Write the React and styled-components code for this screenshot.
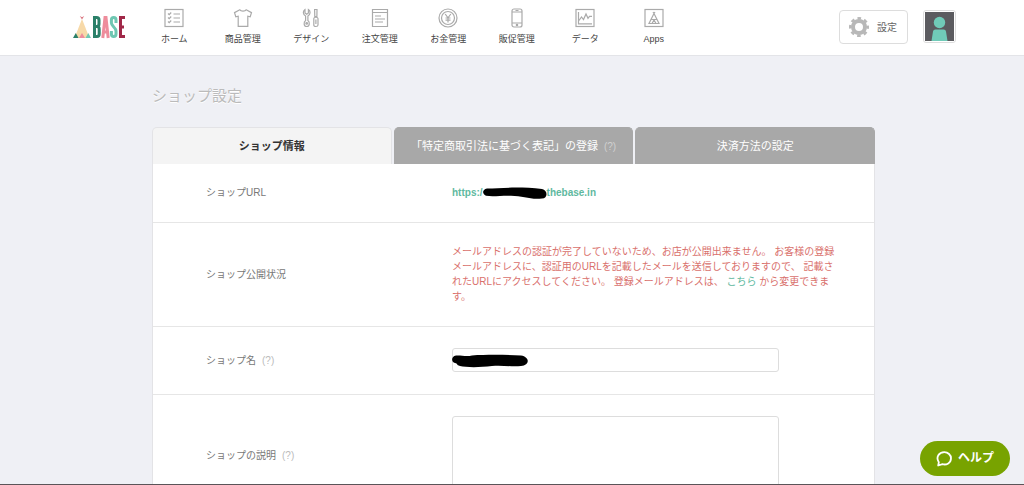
import React from 'react';
import styled, { createGlobalStyle } from 'styled-components';

const icons = {
  home: (
    <>
      <rect x="1" y="1.5" width="18" height="17" />
      <path d="M4 5.5l1.2 1.2 2-2.2M4 9.5l1.2 1.2 2-2.2M4 13.5l1.2 1.2 2-2.2M9.5 6h6.5M9.5 10h6.5M9.5 14h6.5" />
    </>
  ),
  item: (
    <path d="M6.8 1.7C7.8 3.6 12.2 3.6 13.2 1.7L18.5 4.6L17.2 8.8L14.8 8.2V18.3H5.2V8.2L2.8 8.8L1.5 4.6Z" />
  ),
  design: (
    <>
      <path d="M4 1.5C1.6 3 1.8 6.6 4.6 8V12.6C2.4 14 2.6 18.5 5.7 18.5S9 14 6.9 12.6V8C9.6 6.6 9.8 3 7.4 1.5V5L5.7 6.2L4 5Z" />
      <circle cx="5.7" cy="15.4" r="0.8" />
      <path d="M13.6 1.5H16L15.9 8.5H13.8ZM12.8 10.5C12.8 8.8 17 8.8 17 10.5V17C17 19 12.8 19 12.8 17ZM14.9 11.5V16" />
    </>
  ),
  order: (
    <>
      <path d="M2.5 1.5H17.5V18.5H2.5ZM2.5 4.5H17.5" />
      <path d="M5 8H11M5 11H15M5 14H13" />
    </>
  ),
  money: (
    <>
      <circle cx="10" cy="10" r="9" />
      <circle cx="10" cy="10" r="6.5" />
      <path d="M7.2 6L10 9.8L12.8 6M10 9.8V14.5M7.5 10H12.5M7.5 12.2H12.5" />
    </>
  ),
  phone: (
    <>
      <rect x="5" y="1" width="10" height="18" rx="2" />
      <path d="M5 4H15M5 15H15M8.5 2.5H11.5" />
      <circle cx="10" cy="17" r="0.7" />
    </>
  ),
  data: (
    <>
      <rect x="1" y="1.5" width="18" height="17" />
      <path d="M3.5 4V15.8H17M4 12.5L6.5 9L8.5 11.5L11 6L13 10.3L14.5 8.3H17" />
    </>
  ),
  apps: (
    <>
      <rect x="1" y="1.5" width="18" height="17" />
      <path d="M9 4L10 5.5L11 4M10 5.5L5 15.5H15ZM7 11.5H13M8 15.5L10 12L12 15.5" />
    </>
  ),
};

const menu = [
  { icon: 'home', text: 'ホーム' },
  { icon: 'item', text: '商品管理' },
  { icon: 'design', text: 'デザイン' },
  { icon: 'order', text: '注文管理' },
  { icon: 'money', text: 'お金管理' },
  { icon: 'phone', text: '販促管理' },
  { icon: 'data', text: 'データ' },
  { icon: 'apps', text: 'Apps' },
];

const Logo = () => (
  <LogoLink href="#" aria-label="BASE">
    <svg width="20" height="24" viewBox="0 0 20 24">
      <path d="M10 4L17.5 23H2.5Z" fill="#f7d9a8" />
      <path d="M7.8 1L10 4.6L12.2 1L10 2.2Z" fill="#d9747f" />
      <path d="M1 23L3.8 18L6.5 23Z" fill="#2b8069" />
      <path d="M7 23L10 18L13 23Z" fill="#ee8d9c" />
      <path d="M13.5 23L16.3 18L19 23Z" fill="#6fc7b2" />
    </svg>
    <svg width="34" height="24" viewBox="0 0 34 24" fill="none" strokeWidth="3">
      <path d="M2.5 2.5H4.5Q7 2.5 7 5V9Q7 11.5 4.5 11.5H2.5ZM2.5 11.5H5Q7.2 11.5 7.2 14V19Q7.2 21.5 5 21.5H2.5Z" stroke="#2b8069" />
      <path d="M10.8 23L13 2.5H14L16.2 23M12 17H15" stroke="#ee8d9c" />
      <path d="M24 8V5Q24 2.5 21.7 2.5T19.4 5V8C19.4 11 24 12.5 24 16V19Q24 21.5 21.7 21.5T19.4 19V16" stroke="#6fc7b2" />
      <path d="M33 2.5H28.5V21.5H33M28.5 12H32" stroke="#a02848" />
    </svg>
  </LogoLink>
);

const Header = () => (
  <HeaderBar>
    <Logo />
    <Nav>
      {menu.map((item) => (
        <NavItem href="#" key={item.icon}>
          <NavIcon viewBox="0 0 20 20">{icons[item.icon]}</NavIcon>
          {item.text}
        </NavItem>
      ))}
    </Nav>
    <HeaderRight>
      <SettingButton type="button">
        <svg width="20" height="20" viewBox="0 0 20 20" fill="none" stroke="#b8b8b8">
          <circle cx="10" cy="10" r="6" strokeWidth="4" />
          <circle cx="10" cy="10" r="8.7" strokeWidth="2.6" strokeDasharray="3.6 3.233" strokeDashoffset="1.8" />
        </svg>
        設定
      </SettingButton>
      <Avatar type="button" aria-label="アカウント">
        <svg width="29" height="29" viewBox="0 0 29 29">
          <rect width="29" height="29" fill="#5b5b5f" />
          <circle cx="14.5" cy="10.5" r="5.7" fill="#70cbb8" />
          <path d="M6.5 29L8 19.5Q8.3 17.5 10.3 17.5H18.7Q20.7 17.5 21 19.5L22.5 29Z" fill="#70cbb8" />
        </svg>
      </Avatar>
    </HeaderRight>
  </HeaderBar>
);

export default function App() {
  return (
    <Page>
      <GlobalStyle />
      <Header />
      <Main>
        <Title>ショップ設定</Title>
        <Tabs>
          <Tab type="button" $active>ショップ情報</Tab>
          <Tab type="button">「特定商取引法に基づく表記」の登録<Hint $light>(?)</Hint></Tab>
          <Tab type="button">決済方法の設定</Tab>
        </Tabs>
        <Panel>
          <Row>
            <RowTitle>ショップURL</RowTitle>
            <RowBody>
              <ShopUrl href="#">
                https:/
                <UrlMask viewBox="0 0 64 14">
                  <path d="M4 2.5C18 2 38 .5 59 3C65 4.5 65 12 59 12.5C48 14 40 10 28 9.8C18 9.5 10 11 3 9.8C-1 8 -1 3.5 4 2.5Z" />
                </UrlMask>
                thebase.in
              </ShopUrl>
            </RowBody>
          </Row>
          <Row>
            <RowTitle>ショップ公開状況</RowTitle>
            <RowBody>
              <Alert>
                メールアドレスの認証が完了していないため、お店が公開出来ません。 お客様の登録<br />
                メールアドレスに、認証用のURLを記載したメールを送信しておりますので、 記載さ<br />
                れたURLにアクセスしてください。 登録メールアドレスは、 <a href="#">こちら</a> から変更できま<br />
                す。
              </Alert>
            </RowBody>
          </Row>
          <Row>
            <RowTitle as="label" htmlFor="shop-name">ショップ名<Hint>(?)</Hint></RowTitle>
            <RowBody>
              <Field>
                <TextInput id="shop-name" type="text" />
                <NameMask viewBox="0 0 76 14">
                  <path d="M4 1.5C9 1 14 3 20 1.5C35 .5 55 .8 69 1.5C78 3 78 11 69 12C60 13 50 11 40 12C28 13.5 14 13.5 8 12C4 11 6 9.5 3 9C-1 8 -1 2.5 4 1.5Z" />
                </NameMask>
              </Field>
            </RowBody>
          </Row>
          <Row>
            <RowTitle as="label" htmlFor="shop-text">ショップの説明<Hint>(?)</Hint></RowTitle>
            <RowBody>
              <Field>
                <TextArea id="shop-text" />
              </Field>
            </RowBody>
          </Row>
        </Panel>
      </Main>
      <HelpButton type="button">
        <svg width="16" height="16" viewBox="0 0 16 16" fill="none" stroke="#fff" strokeWidth="1.8">
          <path d="M2.2 14.5L2.8 11.3C-.5 6 3 1.2 8.3 1.2C12 1.2 15 4 15 7.3C15 12 10.5 14.3 6.5 13.2Z" strokeLinejoin="round" />
        </svg>
        ヘルプ
      </HelpButton>
      <BottomLine />
    </Page>
  );
}

const GlobalStyle = createGlobalStyle`
* {
  box-sizing: border-box;
}
body {
  margin: 0;
  background: #eff0f5;
  font-family: "Liberation Sans", "Noto Sans CJK JP", sans-serif;
  font-size: 10px;
  line-height: 15px;
  color: #777;
}
button, input, textarea {
  font: inherit;
}
a {
  color: #5fb9a0;
  text-decoration: none;
}
svg {
  display: block;
  flex: none;
}
`;

const Page = styled.div`
height: 100vh;
overflow: hidden;
`;

const HeaderBar = styled.header`
display: flex;
align-items: flex-start;
height: 56px;
padding: 0 68px 0 72px;
background: #fff;
border-bottom: 1px solid #e3e4e8;
`;

const LogoLink = styled.a`
display: flex;
width: 68px;
padding-top: 15px;
`;

const Nav = styled.nav`
display: flex;
flex: 0 1 548px;
`;

const NavItem = styled.a`
display: flex;
flex: 1;
flex-direction: column;
align-items: center;
gap: 4px;
padding-top: 8px;
font-size: 9px;
color: #444;
white-space: nowrap;
`;

const NavIcon = styled.svg`
width: 20px;
height: 20px;
fill: none;
stroke: #aaa;
stroke-width: 1.2;
`;

const HeaderRight = styled.div`
display: flex;
gap: 15px;
margin-left: auto;
padding-top: 10px;
`;

const SettingButton = styled.button`
display: flex;
align-items: center;
gap: 8px;
width: 69px;
height: 34px;
padding: 0 9px;
background: #fff;
border: 1px solid #ddd;
border-radius: 4px;
color: #666;
cursor: pointer;
`;

const Avatar = styled.button`
height: 33px;
padding: 1px;
background: #fff;
border: 1px solid #ddd;
border-radius: 3px;
cursor: pointer;
`;

const Main = styled.main`
padding: 29px 149px 0 152px;
`;

const Title = styled.h1`
margin: 0 0 20px;
font-size: 15px;
font-weight: normal;
line-height: 22px;
color: #bbb;
text-shadow: 0 1px 0 #fff;
`;

const Tabs = styled.div`
display: flex;
gap: 2px;
`;

const Tab = styled.button`
flex: 1 1 0;
height: 37px;
padding: 0;
background: ${props => props.$active ? '#f4f4f4' : '#a8a8a8'};
border: 1px solid ${props => props.$active ? '#e3e3e6' : '#a8a8a8'};
border-bottom: 0;
border-radius: 5px 5px 0 0;
font-size: 11px;
font-weight: ${props => props.$active ? 'bold' : 'normal'};
color: ${props => props.$active ? '#333' : '#fff'};
white-space: nowrap;
cursor: pointer;
`;

const Hint = styled.span`
margin-left: 6px;
font-size: 10px;
color: ${props => props.$light ? '#d0d0d0' : '#bbb'};
`;

const Panel = styled.form`
background: #fff;
border: 1px solid #e3e3e6;
border-top: 0;
`;

const Row = styled.div`
display: flex;
align-items: center;
padding: 21px 28px 22px 53px;
border-bottom: 1px solid #e6e6e6;
`;

const RowTitle = styled.div`
flex: none;
width: 246px;
`;

const RowBody = styled.div`
flex: 1;
`;

const ShopUrl = styled.a`
display: flex;
align-items: center;
font-weight: bold;
`;

const UrlMask = styled.svg`
width: 64px;
height: 14px;
fill: #000;
`;

const Alert = styled.p`
margin: 0;
color: #d9706c;
`;

const Field = styled.div`
position: relative;
max-width: 327px;
`;

const TextInput = styled.input`
display: block;
width: 100%;
height: 24px;
padding: 0 6px;
border: 1px solid #ddd;
border-radius: 3px;
`;

const NameMask = styled.svg`
position: absolute;
top: 6px;
left: 0;
width: 76px;
height: 14px;
fill: #000;
`;

const TextArea = styled.textarea`
display: block;
width: 100%;
height: 78px;
padding: 6px;
border: 1px solid #ddd;
border-radius: 3px;
resize: none;
`;

const HelpButton = styled.button`
position: fixed;
right: 14px;
bottom: 9px;
display: flex;
align-items: center;
justify-content: center;
gap: 6px;
width: 90px;
height: 35px;
padding: 0;
background: #78a300;
border: 0;
border-radius: 18px;
font-size: 12px;
font-weight: bold;
color: #fff;
cursor: pointer;
`;

const BottomLine = styled.div`
position: fixed;
right: 0;
bottom: 0;
left: 0;
height: 1px;
background: #5a5458;
`;
